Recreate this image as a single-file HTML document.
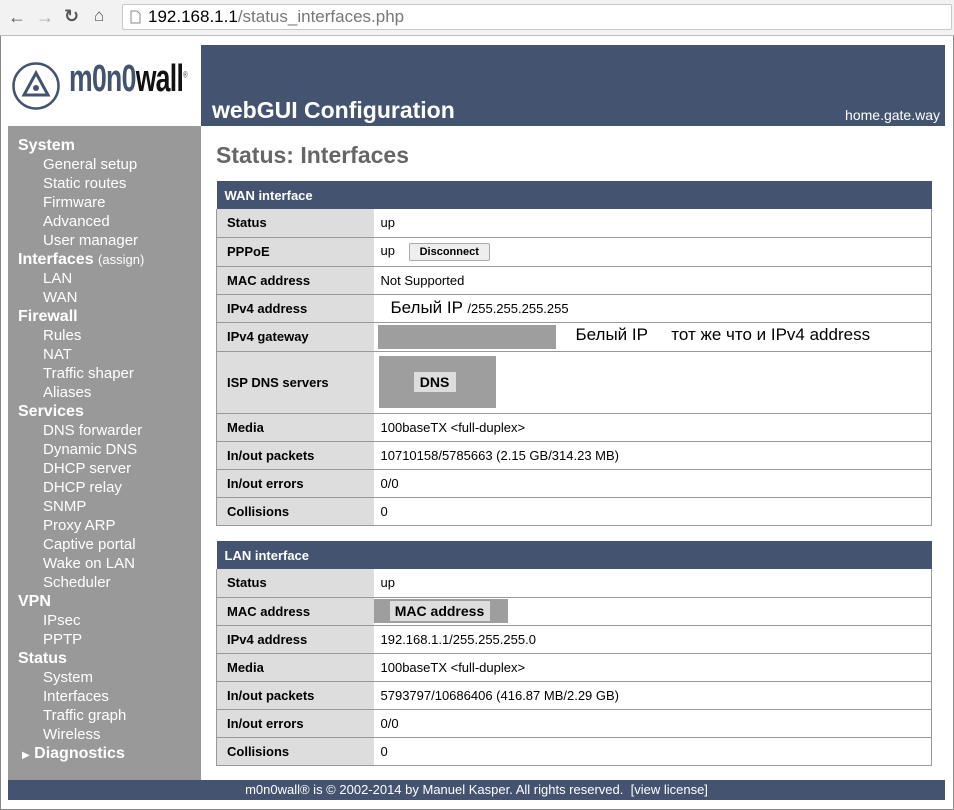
<!DOCTYPE html>
<html><head><meta charset="utf-8"><style>
*{margin:0;padding:0;box-sizing:border-box}
body{width:954px;height:810px;background:#fff;font-family:"Liberation Sans","DejaVu Sans",sans-serif;position:relative;overflow:hidden}
.chrome{position:absolute;left:0;top:0;width:954px;height:36px;background:#f2f2f2;border-bottom:1px solid #bbb}
.url{position:absolute;left:122px;top:4px;width:830px;height:26px;background:#fff;border:1px solid #c8c8c8;border-radius:2px;font-size:17px;line-height:24px;padding-left:25px;color:#000}
.url span{color:#777}
.frame{position:absolute;left:0;top:36px;width:954px;height:774px;border:1px solid #888;border-top:none}
.hdr{position:absolute;left:201px;top:45px;width:744px;height:81px;background:#435370;color:#fff}
.hdr .t{position:absolute;left:11px;top:52px;font-size:23px;font-weight:bold}
.hdr .h{position:absolute;right:5px;top:62px;font-size:14px}
.side{position:absolute;left:8px;top:126px;width:193px;height:654px;background:#999;color:#fff;font-size:15px;padding-top:10px}
.side div{height:19px;line-height:19px;padding-left:35px}
.side div.b{font-weight:bold;font-size:16px;padding-left:10px}
.side small{font-weight:normal;font-size:13px}
h1{position:absolute;left:216px;top:142px;font-size:23px;color:#666;font-weight:bold}
table{position:absolute;left:216px;width:716px;border-collapse:collapse;font-size:13px}
th{background:#435370;color:#fff;text-align:left;height:28px;padding-left:8px;font-size:13px}
td{height:28px;border:1px solid #999;border-top:none;padding-left:8px}
td.l{background:#ddd;font-weight:bold;width:157px;padding-left:10px;border-right:none;border-left:1px solid #999}
td.v{border-left:none;padding-left:7px}
.btn{display:inline-block;border:1px solid #aaa;background:#eee;font-size:11px;font-weight:bold;padding:2px 10px;margin-left:10px;border-radius:2px}
.foot{position:absolute;left:8px;top:780px;width:937px;height:20px;background:#435370;color:#fff;font-size:13px;text-align:center;line-height:20px}
</style></head><body>
<div class="chrome">
<div style="position:absolute;left:8px;top:7px;font-size:18px;color:#555">&#8592;</div>
<div style="position:absolute;left:36px;top:7px;font-size:18px;color:#aaa">&#8594;</div>
<div style="position:absolute;left:64px;top:6px;font-size:18px;color:#555;font-weight:bold">&#8635;</div>
<div style="position:absolute;left:94px;top:6px;font-size:17px;color:#555">&#8962;</div>
<div class="url"><svg style="position:absolute;left:7px;top:5px" width="11" height="14"><path d="M1 1h6l3 3v9H1z" fill="#fff" stroke="#888"/></svg>192.168.1.1<span>/status_interfaces.php</span></div>
</div>
<div class="frame"></div>
<svg style="position:absolute;left:12px;top:62px" width="50" height="50"><circle cx="24" cy="24" r="22.5" fill="none" stroke="#435370" stroke-width="2.5"/><path d="M24 11L12 33h24z" fill="none" stroke="#435370" stroke-width="3"/><circle cx="24" cy="26" r="3" fill="#435370"/></svg>
<div style="position:absolute;left:69px;top:58px;font-size:38px;font-weight:bold;letter-spacing:-1px;transform:scaleX(0.7);transform-origin:left;white-space:nowrap"><span style="color:#435370">m0n0</span><span style="color:#111">wall</span><sup style="font-size:9px;color:#666">®</sup></div>
<div class="hdr"><div class="t">webGUI Configuration</div><div class="h">home.gate.way</div></div>
<div class="side">
<div class="b">System</div><div>General setup</div><div>Static routes</div><div>Firmware</div><div>Advanced</div><div>User manager</div>
<div class="b">Interfaces <small>(assign)</small></div><div>LAN</div><div>WAN</div>
<div class="b">Firewall</div><div>Rules</div><div>NAT</div><div>Traffic shaper</div><div>Aliases</div>
<div class="b">Services</div><div>DNS forwarder</div><div>Dynamic DNS</div><div>DHCP server</div><div>DHCP relay</div><div>SNMP</div><div>Proxy ARP</div><div>Captive portal</div><div>Wake on LAN</div><div>Scheduler</div>
<div class="b">VPN</div><div>IPsec</div><div>PPTP</div>
<div class="b">Status</div><div>System</div><div>Interfaces</div><div>Traffic graph</div><div>Wireless</div>
<div class="b" style="padding-left:14px"><span style="font-size:10px">&#9654;</span> Diagnostics</div>
</div>
<h1>Status: Interfaces</h1>
<table style="top:181px">
<tr><th colspan="2">WAN interface</th></tr>
<tr><td class="l">Status</td><td class="v">up</td></tr>
<tr><td class="l" style="height:29px">PPPoE</td><td class="v">up <span class="btn">Disconnect</span></td></tr>
<tr><td class="l">MAC address</td><td class="v">Not Supported</td></tr>
<tr><td class="l">IPv4 address</td><td class="v"><span style="font-size:17px;margin-left:10px">Белый IP </span>/255.255.255.255</td></tr>
<tr><td class="l" style="height:29px">IPv4 gateway</td><td class="v" style="padding-left:4px"><span style="display:inline-block;width:178px;height:24px;background:#9e9e9e;vertical-align:middle"></span><span style="font-size:17px;margin-left:20px">Белый IP &nbsp;&nbsp;&nbsp; тот же что и IPv4 address</span></td></tr>
<tr><td class="l" style="height:62px">ISP DNS servers</td><td class="v" style="padding-left:5px"><span style="display:inline-block;width:117px;height:52px;background:#9e9e9e;position:relative;vertical-align:middle"><span style="position:absolute;left:35px;top:16px;width:42px;height:20px;line-height:20px;text-align:center;background:#ddd;font-weight:bold;font-size:14px">DNS</span></span></td></tr>
<tr><td class="l">Media</td><td class="v">100baseTX &lt;full-duplex&gt;</td></tr>
<tr><td class="l">In/out packets</td><td class="v">10710158/5785663 (2.15 GB/314.23 MB)</td></tr>
<tr><td class="l">In/out errors</td><td class="v">0/0</td></tr>
<tr><td class="l">Collisions</td><td class="v">0</td></tr>
</table>
<table style="top:541px">
<tr><th colspan="2">LAN interface</th></tr>
<tr><td class="l">Status</td><td class="v">up</td></tr>
<tr><td class="l">MAC address</td><td class="v" style="padding-left:0"><span style="display:inline-block;width:134px;height:24px;background:#9e9e9e;position:relative;vertical-align:middle;margin-left:0"><span style="position:absolute;left:16px;top:2px;width:100px;height:20px;line-height:20px;text-align:center;background:#ddd;font-weight:bold;font-size:14px">MAC address</span></span></td></tr>
<tr><td class="l">IPv4 address</td><td class="v">192.168.1.1/255.255.255.0</td></tr>
<tr><td class="l">Media</td><td class="v">100baseTX &lt;full-duplex&gt;</td></tr>
<tr><td class="l">In/out packets</td><td class="v">5793797/10686406 (416.87 MB/2.29 GB)</td></tr>
<tr><td class="l">In/out errors</td><td class="v">0/0</td></tr>
<tr><td class="l">Collisions</td><td class="v">0</td></tr>
</table>
<div class="foot">m0n0wall® is © 2002-2014 by Manuel Kasper. All rights reserved. &nbsp;[view license]</div>
</body></html>
